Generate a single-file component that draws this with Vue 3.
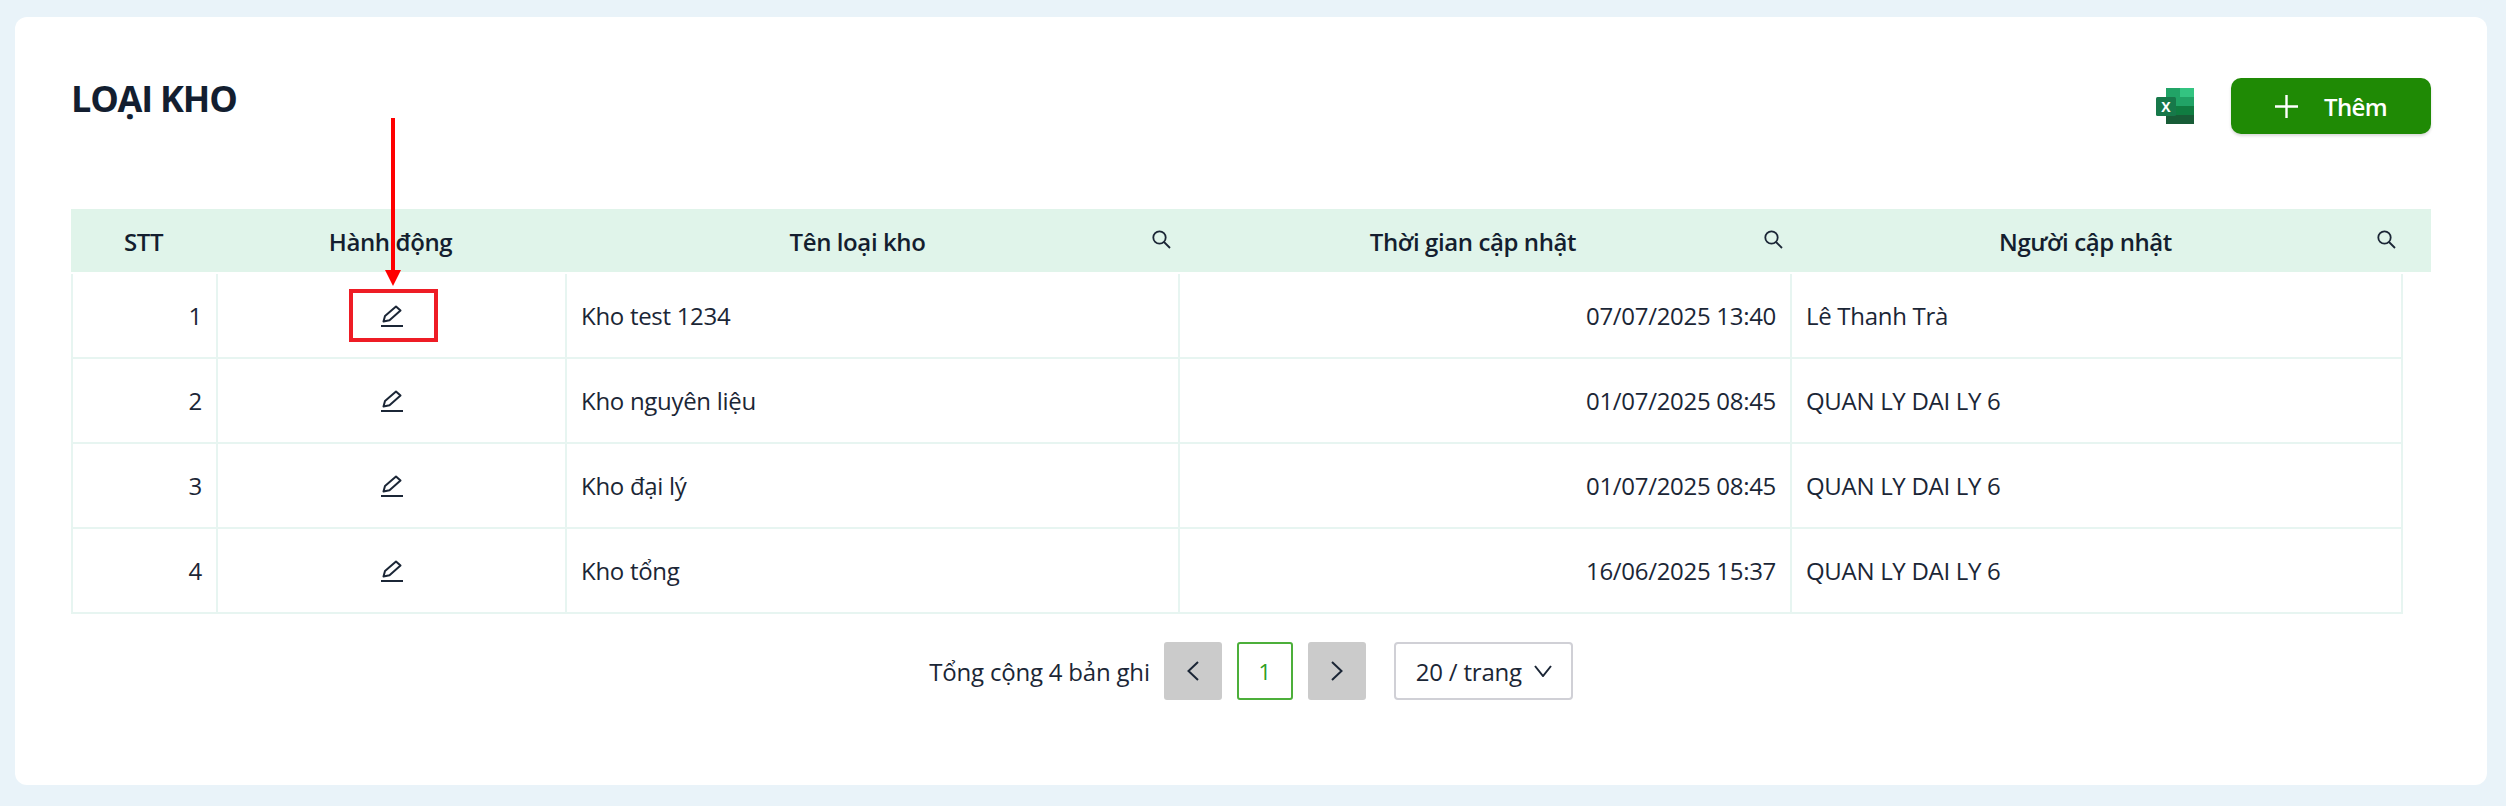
<template>
  <div class="page">
    <div class="card">
      <div class="top">
        <h1 class="title">LOẠI KHO</h1>
        <div class="actions">
          <svg class="excel" viewBox="0 0 38 36" width="38" height="36">
            <rect x="10" y="0" width="14" height="9" fill="#21a366" />
            <rect x="24" y="0" width="14" height="9" fill="#33c481" />
            <rect x="10" y="9" width="28" height="9" fill="#21a366" />
            <rect x="10" y="18" width="28" height="9" fill="#107c41" />
            <rect x="10" y="27" width="28" height="9" fill="#185c37" />
            <rect x="0" y="9" width="20" height="19" rx="1.5" fill="#17784a" />
            <text x="10" y="23.5" text-anchor="middle" class="excel-x">X</text>
          </svg>
          <button class="add-btn">
            <svg viewBox="0 0 23 23" width="23" height="23">
              <path d="M11.5 0v23M0 11.5h23" stroke="#fff" stroke-width="2.4" fill="none" />
            </svg>
            <span>Thêm</span>
          </button>
        </div>
      </div>

      <div class="thead">
        <div
          v-for="col in columns"
          :key="col.title"
          class="th"
          :style="{ paddingRight: col.shift + 'px' }"
        >
          <span>{{ col.title }}</span>
          <svg v-if="col.search" class="search" viewBox="0 0 19 19" width="19" height="19">
            <circle cx="7.5" cy="7.5" r="6.2" stroke="#1b2636" stroke-width="1.8" fill="none" />
            <path d="M12 12l6 6" stroke="#1b2636" stroke-width="1.8" fill="none" />
          </svg>
        </div>
      </div>

      <div class="tbody">
        <div v-for="(row, i) in rows" :key="row.name" class="tr">
          <div class="td right">{{ i + 1 }}</div>
          <div class="td center">
            <span v-if="i === 0" class="mark"></span>
            <span v-if="i === 0" class="arrow"></span>
            <svg viewBox="0 0 22 22" width="22" height="22">
              <path
                d="M2.5 16.5L4 11L15 1.5L19.5 5.5L8.5 15.2Z"
                stroke="#1b2636"
                stroke-width="2"
                stroke-linejoin="round"
                fill="none"
              />
              <path d="M0 21h22" stroke="#1b2636" stroke-width="2" fill="none" />
            </svg>
          </div>
          <div class="td">{{ row.name }}</div>
          <div class="td right">{{ row.time }}</div>
          <div class="td">{{ row.user }}</div>
        </div>
      </div>

      <div class="pager">
        <span class="total">Tổng cộng 4 bản ghi</span>
        <button class="nav">
          <svg viewBox="0 0 12 20" width="12" height="20">
            <path d="M11 1L1.5 10L11 19" stroke="#1b2636" stroke-width="2" fill="none" />
          </svg>
        </button>
        <button class="num">1</button>
        <button class="nav">
          <svg viewBox="0 0 12 20" width="12" height="20">
            <path d="M1 1L10.5 10L1 19" stroke="#1b2636" stroke-width="2" fill="none" />
          </svg>
        </button>
        <div class="size">
          <span>20 / trang</span>
          <svg viewBox="0 0 18 12" width="18" height="12">
            <path d="M1 1L9 11L17 1" stroke="#1b2636" stroke-width="2" fill="none" />
          </svg>
        </div>
      </div>
    </div>
  </div>
</template>

<script setup>
const columns = [
  { title: 'STT', search: false, shift: 0 },
  { title: 'Hành động', search: false, shift: 0 },
  { title: 'Tên loại kho', search: true, shift: 28 },
  { title: 'Thời gian cập nhật', search: true, shift: 22 },
  { title: 'Người cập nhật', search: true, shift: 22 },
]

const rows = [
  { name: 'Kho test 1234', time: '07/07/2025 13:40', user: 'Lê Thanh Trà' },
  { name: 'Kho nguyên liệu', time: '01/07/2025 08:45', user: 'QUAN LY DAI LY 6' },
  { name: 'Kho đại lý', time: '01/07/2025 08:45', user: 'QUAN LY DAI LY 6' },
  { name: 'Kho tổng', time: '16/06/2025 15:37', user: 'QUAN LY DAI LY 6' },
]
</script>

<style scoped>
.page {
  box-sizing: border-box;
  width: 2506px;
  height: 806px;
  padding: 17px 19px 21px 15px;
  background: #e9f3f9;
  font-family: 'Open Sans', 'Noto Sans', sans-serif;
  color: #1b2636;
  overflow: hidden;
}

.card {
  box-sizing: border-box;
  height: 768px;
  padding: 0 56px;
  background: #fff;
  border-radius: 12px;
}

.top {
  display: flex;
  justify-content: space-between;
  align-items: flex-start;
  height: 192px;
}

.title {
  margin: 59px 0 0;
  font-size: 36px;
  line-height: 46px;
  font-weight: 700;
  letter-spacing: -1.2px;
  color: #131e30;
}

.actions {
  display: flex;
  align-items: center;
  gap: 37px;
  margin-top: 61px;
}

.excel-x {
  font-family: 'Open Sans', sans-serif;
  font-size: 14px;
  font-weight: 700;
  fill: #fff;
}

.add-btn {
  display: flex;
  align-items: center;
  justify-content: center;
  gap: 26px;
  width: 200px;
  height: 56px;
  padding: 0;
  border: none;
  border-radius: 10px;
  background: #1f8a05;
  box-shadow: 0 2px 3px rgba(0, 0, 0, 0.15);
  color: #fff;
  font-family: inherit;
  font-size: 24px;
  font-weight: 600;
  letter-spacing: -0.6px;
}

.thead {
  display: grid;
  grid-template-columns: 145px 349px 613px 612px 613px;
  width: 2360px;
  height: 63px;
  margin-bottom: 2px;
  padding-right: 28px;
  box-sizing: border-box;
  background: #e0f4ea;
}

.th {
  position: relative;
  display: flex;
  align-items: center;
  justify-content: center;
  padding-top: 2px;
  font-size: 24px;
  font-weight: 600;
  letter-spacing: -0.4px;
  color: #141e2f;
}

.search {
  position: absolute;
  right: 7px;
  top: 21px;
}

.tbody {
  width: 2332px;
}

.tr {
  display: grid;
  grid-template-columns: 145px 349px 613px 612px 613px;
  height: 85px;
  box-sizing: border-box;
  border-bottom: 2px solid #e7f5f1;
}

.td {
  position: relative;
  display: flex;
  align-items: center;
  padding: 0 14px;
  border-left: 2px solid #e7f5f1;
  font-size: 24px;
  letter-spacing: -0.3px;
}

.td:last-child {
  border-right: 2px solid #e7f5f1;
}

.right {
  justify-content: flex-end;
}

.center {
  justify-content: center;
}

.mark {
  position: absolute;
  left: 131px;
  top: 15px;
  width: 89px;
  height: 53px;
  box-sizing: border-box;
  border: 4px solid #ee1c25;
}

.arrow {
  position: absolute;
  left: 173px;
  top: -156px;
  width: 4px;
  height: 152px;
  background: #f00;
}

.arrow::after {
  content: '';
  position: absolute;
  left: -6px;
  bottom: -16px;
  border-left: 8px solid transparent;
  border-right: 8px solid transparent;
  border-top: 16px solid #f00;
}

.pager {
  display: flex;
  align-items: center;
  justify-content: center;
  margin-top: 28px;
  font-size: 24px;
  letter-spacing: -0.2px;
}

.total {
  margin-right: 14px;
}

.nav,
.num {
  display: flex;
  align-items: center;
  justify-content: center;
  box-sizing: border-box;
  width: 58px;
  height: 58px;
  padding: 0;
  border-radius: 3px;
  font-family: inherit;
}

.nav {
  border: none;
  background: #cbcbcb;
}

.num {
  margin: 0 15px;
  width: 56px;
  border: 2px solid #4caf3a;
  background: #fff;
  color: #2e9e1f;
  font-size: 22px;
}

.size {
  display: flex;
  align-items: center;
  justify-content: space-between;
  box-sizing: border-box;
  width: 179px;
  height: 58px;
  margin-left: 28px;
  padding: 0 19px 0 20px;
  border: 2px solid #d0d0d6;
  border-radius: 4px;
}
</style>

<style>
html,
body {
  margin: 0;
}
</style>
